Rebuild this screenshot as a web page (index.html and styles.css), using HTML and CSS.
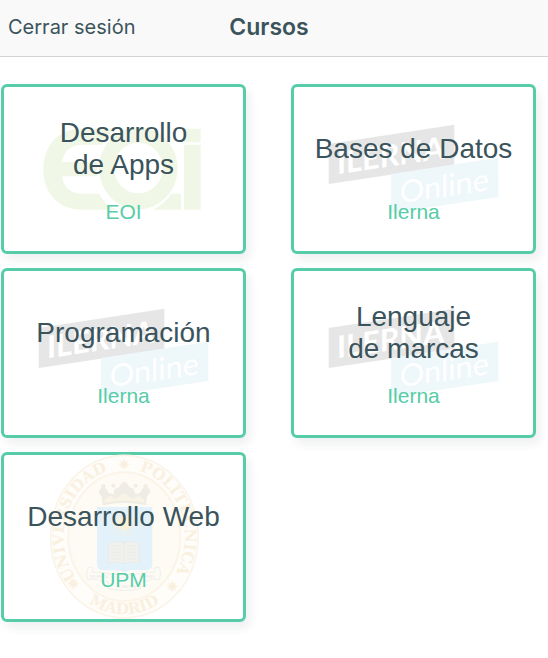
FILE: index.html
```html
<!DOCTYPE html>
<html lang="es">
<head>
<meta charset="utf-8">
<meta name="viewport" content="width=device-width, initial-scale=1">
<title>Cursos</title>
<link rel="stylesheet" href="styles.css">
</head>
<body>
<svg class="symbols" aria-hidden="true">
  <symbol id="ilerna" viewBox="33 28 735 510">
    <path fill="#e6e6e6" d="M146 208 523 150V272L146 328Z"/>
    <path fill="#eef7fa" d="M333 298 655 249V367L333 415Z"/>
    <text class="ilerna-name" transform="translate(171 299) skewY(-8.5)">ILERNA</text>
    <text class="ilerna-online" transform="translate(359 386) skewY(-8.5)">Online</text>
  </symbol>
</svg>

<header class="navbar">
  <button class="logout" type="button">Cerrar sesión</button>
  <h1 class="page-title">Cursos</h1>
</header>

<main class="courses">
  <a class="card" href="#apps">
    <svg class="watermark" viewBox="3 28 735 510" aria-hidden="true">
      <g fill="#f1f7e6">
        <path d="M350 162H245C170 162 130 218 130 284S170 405 245 405H352C325 395 307 378 297 357H245C209 357 190 335 186 305H292Q288 283 292 262H186C191 232 211 210 245 210H306Q320 180 350 162Z"/>
        <path fill-rule="evenodd" d="M415 158A118 123 0 1 1 415 404A118 123 0 1 1 415 158ZM415 204A73 76 0 1 0 415 356A73 76 0 1 0 415 204Z"/>
        <path d="M459 405Q491 389 514 357H543V405Z"/>
        <path d="M552 162H602V203H552ZM552 210H602V405H552Z"/>
      </g>
    </svg>
    <h2 class="name">Desarrollo<br>de Apps</h2>
    <p class="school">EOI</p>
  </a>
  <a class="card" href="#datos">
    <svg class="watermark" aria-hidden="true"><use href="#ilerna"/></svg>
    <h2 class="name">Bases de Datos</h2>
    <p class="school">Ilerna</p>
  </a>
  <a class="card" href="#programacion">
    <svg class="watermark" aria-hidden="true"><use href="#ilerna"/></svg>
    <h2 class="name">Programación</h2>
    <p class="school">Ilerna</p>
  </a>
  <a class="card" href="#marcas">
    <svg class="watermark" aria-hidden="true"><use href="#ilerna"/></svg>
    <h2 class="name">Lenguaje<br>de marcas</h2>
    <p class="school">Ilerna</p>
  </a>
  <a class="card" href="#web">
    <svg class="watermark" viewBox="3 21 735 510" aria-hidden="true">
      <defs>
        <path id="seal-top" d="M373 479A182 204 0 0 1 373 71A182 204 0 0 1 373 479"/>
        <path id="seal-bottom" d="M165 275A208 232 0 0 0 581 275"/>
        <path id="star" d="M0-18 4-8 13-13 8-4 18 0 8 4 13 13 4 8 0 18-4 8-13 13-8 4-18 0-8-4-13-13-4-8Z"/>
      </defs>
      <ellipse cx="373" cy="275" rx="221" ry="244" fill="#fffdfa" stroke="#fbf4e8" stroke-width="5"/>
      <ellipse cx="373" cy="275" rx="168" ry="193" fill="#fefbf4" stroke="#fbf4e8" stroke-width="6"/>
      <g class="seal-text">
        <text><textPath href="#seal-top" startOffset="30%">UNIVERSIDAD</textPath></text>
        <text><textPath href="#seal-top" startOffset="69%">POLITECNICA</textPath></text>
        <text><textPath href="#seal-bottom" startOffset="50%">MADRID</textPath></text>
      </g>
      <g fill="#f9f0df">
        <use href="#star" x="372" y="58"/>
        <use href="#star" x="220" y="416"/>
        <use href="#star" x="517" y="424"/>
      </g>
      <g fill="#eeece4">
        <path d="M308 181 306 157 295 140 304 128 318 130 326 144 340 148 345 131 358 127 366 114H380L389 127 401 131 407 148 420 144 428 130 443 127 452 139 440 157 438 181Q373 166 308 181Z"/>
        <path fill="#f8f3e4" d="M312 164 332 152 348 162 372 144 397 162 415 152 434 164 432 174Q373 160 314 174Z"/>
        <g fill="#f1ede0"><circle cx="310" cy="124" r="7"/><circle cx="340" cy="122" r="6"/><circle cx="373" cy="118" r="7"/><circle cx="407" cy="122" r="6"/><circle cx="437" cy="124" r="7"/></g>
      </g>
      <path fill="#e3f2fa" d="M291 186H457V356Q457 374 440 376H390L373 382 357 376H310Q291 375 291 356Z"/>
      <g stroke="#faf0d8" stroke-width="3">
        <path d="M373 194V274M334 234H412M345 206 401 262M401 206 345 262M356 197 390 271M390 197 356 271M338 218 408 250M408 218 338 250"/>
        <circle cx="373" cy="234" r="20" fill="#fbf1d6" stroke="none"/>
      </g>
      <path fill="#f0f1ec" stroke="#e3e8e8" stroke-width="2" d="M326 295Q350 284 371 293 395 284 415 293L419 354Q395 349 371 356 348 349 324 354Z"/>
      <path fill="none" stroke="#e6eaea" stroke-width="2" d="M371 293V356M334 303 362 301M334 313 362 311M334 323 362 321M334 333 362 331M334 343 362 341M380 301 408 303M380 311 408 313M380 321 408 323M380 331 408 333M380 341 408 343"/>
      <path fill="#fdfbf6" stroke="#f0efeb" stroke-width="3" d="M260 382 265 367H278V382H300Q372 397 445 382H465V367H478L482 382 479 403H452Q440 412 422 409V431Q373 442 325 431V409Q305 412 290 403H262Z"/>
      <text class="motto" x="268" y="399">TECHNICA</text>
      <text class="motto" x="418" y="399">IMPENDI</text>
      <text class="motto" x="348" y="429">TE NATIONI</text>
    </svg>
    <h2 class="name">Desarrollo Web</h2>
    <p class="school">UPM</p>
  </a>
</main>
</body>
</html>
```

FILE: styles.css
```css
* {
  box-sizing: border-box;
}

body {
  margin: 0;
  background: #fff;
  color: #3b545c;
  font-family: "Liberation Sans", Arial, sans-serif;
}

.symbols {
  position: absolute;
  width: 0;
  height: 0;
}

.navbar {
  display: grid;
  grid-template-columns: 1fr auto 1fr;
  align-items: center;
  height: 57px;
  padding: 0 18px 3px 8px;
  border-bottom: 1px solid #d2d2d2;
  background: #f9f9f9;
  font-family: Inter, sans-serif;
}

.logout {
  justify-self: start;
  padding: 0;
  border: 0;
  background: none;
  color: inherit;
  font: 400 20px/24px Inter, sans-serif;
}

.page-title {
  margin: 0;
  font-size: 23px;
  font-weight: 600;
  line-height: 28px;
}

.courses {
  display: grid;
  grid-template-columns: 1fr 1fr;
  gap: 14px 45px;
  padding: 27px 12px 36px 1px;
}

.card {
  position: relative;
  display: flex;
  flex-direction: column;
  align-items: center;
  min-height: 170px;
  padding: 30px 8px 20px;
  border: 3px solid #57cca8;
  border-radius: 6px;
  background: #fff;
  box-shadow: 4px 6px 10px rgba(50, 70, 75, 0.08);
  color: inherit;
  text-align: center;
  text-decoration: none;
}

.watermark {
  position: absolute;
  inset: -3px;
  width: calc(100% + 6px);
  height: calc(100% + 6px);
}

.name {
  position: relative;
  display: flex;
  flex-direction: column;
  justify-content: center;
  min-height: 64px;
  margin: 0;
  font-size: 28px;
  font-weight: 400;
  line-height: 32px;
}

.school {
  position: relative;
  margin: 19px 0 0;
  color: #57cca8;
  font-size: 21px;
  line-height: 24px;
}

.ilerna-name {
  fill: #fff;
  font: 700 92px Lato, sans-serif;
}

.ilerna-online {
  fill: #fff;
  font: 400 92px Lato, sans-serif;
}

.seal-text {
  fill: #f9f0df;
  font: 700 46px "DejaVu Serif", serif;
  text-anchor: middle;
}

.motto {
  fill: #e9e8e4;
  font: 400 11px "Liberation Sans", sans-serif;
}
```
